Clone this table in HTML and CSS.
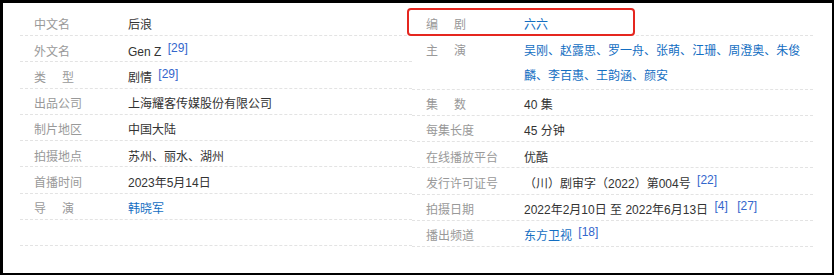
FILE: index.html
```html
<!DOCTYPE html>
<html lang="zh-CN">
<head>
<meta charset="utf-8">
<title>后浪</title>
<link rel="stylesheet" href="styles.css">
</head>
<body>
<div class="frame">
  <div class="info">
    <dl class="col col-left">
      <div class="row"><dt>中文名</dt><dd>后浪</dd></div>
      <div class="row"><dt>外文名</dt><dd>Gen Z<sup class="ref">&nbsp;[29]</sup></dd></div>
      <div class="row"><dt>类<span class="gap"></span>型</dt><dd>剧情<sup class="ref">&nbsp;[29]</sup></dd></div>
      <div class="row"><dt>出品公司</dt><dd>上海耀客传媒股份有限公司</dd></div>
      <div class="row"><dt>制片地区</dt><dd>中国大陆</dd></div>
      <div class="row"><dt>拍摄地点</dt><dd>苏州、丽水、湖州</dd></div>
      <div class="row"><dt>首播时间</dt><dd>2023年5月14日</dd></div>
      <div class="row"><dt>导<span class="gap"></span>演</dt><dd><a class="link">韩晓军</a></dd></div>
      <div class="row"><dt>&nbsp;</dt><dd>&nbsp;</dd></div>
    </dl>
    <dl class="col col-right">
      <div class="row"><dt>编<span class="gap"></span>剧</dt><dd><a class="link">六六</a></dd></div>
      <div class="row row-multi"><dt>主<span class="gap"></span>演</dt><dd class="wrap"><a class="link">吴刚</a><span class="link">、</span><a class="link">赵露思</a><span class="link">、</span><a class="link">罗一舟</a><span class="link">、</span><a class="link">张萌</a><span class="link">、</span><a class="link">江珊</a><span class="link">、</span><a class="link">周澄奥</a><span class="link">、</span><a class="link">朱俊</a><a class="link">麟</a><span class="link">、</span><a class="link">李百惠</a><span class="link">、</span><a class="link">王韵涵</a><span class="link">、</span><a class="link">颜安</a></dd></div>
      <div class="row"><dt>集<span class="gap"></span>数</dt><dd>40 集</dd></div>
      <div class="row"><dt>每集长度</dt><dd>45 分钟</dd></div>
      <div class="row"><dt>在线播放平台</dt><dd>优酷</dd></div>
      <div class="row"><dt>发行许可证号</dt><dd>（川）剧审字（2022）第004号<sup class="ref">&nbsp;[22]</sup></dd></div>
      <div class="row"><dt>拍摄日期</dt><dd>2022年2月10日 至 2022年6月13日<sup class="ref">&nbsp;[4]</sup><sup class="ref">&nbsp;[27]</sup></dd></div>
      <div class="row"><dt>播出频道</dt><dd><a class="link">东方卫视</a><sup class="ref">&nbsp;[18]</sup></dd></div>
    </dl>
    <div class="highlight"></div>
  </div>
</div>
</body>
</html>
```
FILE: styles.css
```css
html, body {
  margin: 0;
  padding: 0;
  background: #fff;
}

.frame {
  box-sizing: border-box;
  width: 834px;
  height: 275px;
  border-style: solid;
  border-color: #000;
  border-width: 3px 2px 2px 3px;
  background: #fff;
  padding: 6.75px 0 0 17px;
  font-family: "Liberation Sans", "Noto Sans CJK SC", sans-serif;
  font-size: 12px;
  color: #333;
}

.info {
  position: relative;
  display: grid;
  grid-template-columns: 392px 401px;
}

.col {
  margin: 0;
  padding: 0;
}

.row {
  display: flex;
  box-sizing: border-box;
  padding-top: 7.5px;
  line-height: 17.75px;
  border-bottom: 1px dashed #e3e3e3;
}

.row-multi {
  padding-top: 2.5px;
  line-height: 25px;
}

dt {
  box-sizing: border-box;
  flex: none;
  padding-left: 14px;
  color: #999;
  white-space: nowrap;
}

.col-left dt {
  width: 108px;
}

.col-right dt {
  width: 112px;
}

dd {
  margin: 0;
  flex: 1;
  min-width: 0;
}

.wrap {
  flex: none;
  width: 282px;
}

.gap {
  display: inline-block;
  width: 16px;
}

.link {
  color: #136ec2;
  text-decoration: none;
}

.ref {
  font-size: 12px;
  line-height: 0;
  vertical-align: 4px;
  color: #3366cc;
  margin: 0 3px;
}

.highlight {
  position: absolute;
  left: 387px;
  top: -1.75px;
  width: 228px;
  height: 28px;
  box-sizing: border-box;
  border: 2px solid #e5261f;
  border-radius: 4px;
  pointer-events: none;
}
```
